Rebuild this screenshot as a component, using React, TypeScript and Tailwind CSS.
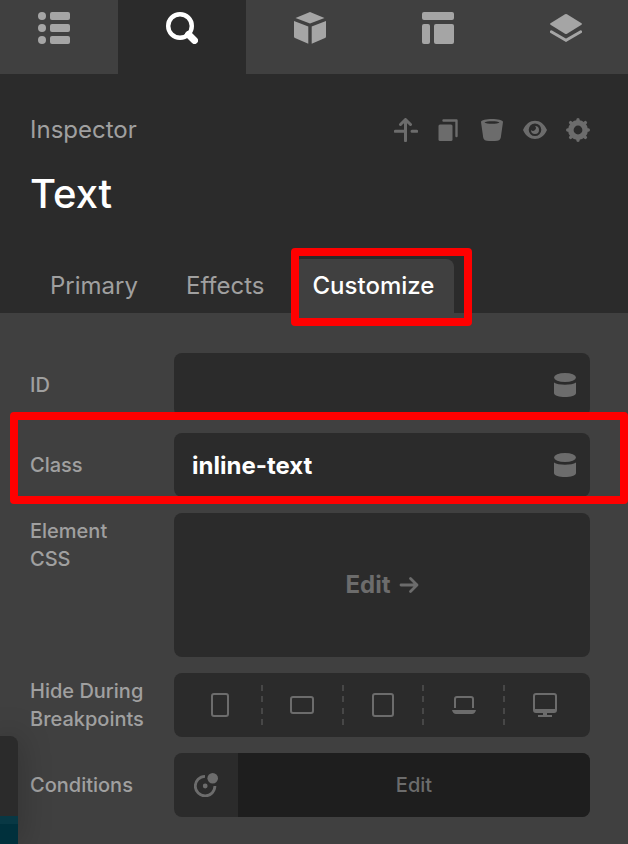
import type { ReactNode } from 'react';

const navItems = [
  {
    label: 'Outline',
    icon: (
      <>
        <circle cx="4" cy="4" r="4" />
        <circle cx="4" cy="16" r="4" />
        <circle cx="4" cy="28" r="4" />
        <rect x="12" width="20" height="8" rx="2" />
        <rect x="12" y="12" width="20" height="8" rx="2" />
        <rect x="12" y="24" width="20" height="8" rx="2" />
      </>
    ),
  },
  {
    label: 'Inspector',
    icon: (
      <>
        <circle cx="14" cy="14" r="11.800" fill="none" stroke="currentColor" strokeWidth="4.400" />
        <path d="M22.500 22.500 28.500 28.500" stroke="currentColor" strokeWidth="7" strokeLinecap="round" />
      </>
    ),
  },
  {
    label: 'Elements',
    icon: (
      <path d="M16 0 30.500 6 16 11.500 1.500 6ZM0 9 14.300 14.500V31.700L1 26Q0 25.500 0 24.500ZM32 9 17.700 14.500V31.700L31 26Q32 25.500 32 24.500Z" />
    ),
  },
  {
    label: 'Layout',
    icon: (
      <>
        <rect width="32" height="8" rx="2" />
        <rect y="12" width="8" height="20" rx="2" />
        <rect x="12" y="12" width="20" height="20" rx="2" />
      </>
    ),
  },
  {
    label: 'Layers',
    icon: (
      <>
        <path d="M15 2.300Q16 1.700 17 2.300L31.500 11.300Q32.300 12 31.500 12.700L17 21.700Q16 22.300 15 21.700L.500 12.700Q-.300 12 .500 11.300Z" />
        <path d="M1.300 19.700 16 28.300 30.700 19.700" fill="none" stroke="currentColor" strokeWidth="2.800" strokeLinecap="round" />
      </>
    ),
  },
];

const actions = [
  {
    label: 'Move',
    icon: (
      <path
        d="M11.500 22.700V2M6.500 6.500 11.500 1.500 16.500 6.500M1.300 13.300H11.500M18 13.300H22.700"
        fill="none"
        stroke="currentColor"
        strokeWidth="3"
        strokeLinecap="round"
        strokeLinejoin="round"
      />
    ),
  },
  {
    label: 'Duplicate',
    icon: (
      <>
        <rect x="1.500" y="6.500" width="14" height="16.500" rx="1.500" />
        <path d="M6.500 2.500H19.500V18" fill="none" stroke="currentColor" strokeWidth="2.400" strokeLinecap="round" strokeLinejoin="round" />
      </>
    ),
  },
  {
    label: 'Delete',
    icon: (
      <path
        fillRule="evenodd"
        d="M1 4C1 0 23 0 23 4L20.800 19.500Q20.300 23 15 23H9Q3.700 23 3.200 19.500ZM4.500 4.300C6 6.300 18 6.300 19.500 4.300C18 2.800 6 2.800 4.500 4.300Z"
      />
    ),
  },
  {
    label: 'Visibility',
    icon: (
      <>
        <path fillRule="evenodd" d="M0 12C5-.500 19-.500 24 12C19 24 5 24 0 12ZM12 5.500A6.300 6.300 0 1 0 12 18.100A6.300 6.300 0 1 0 12 5.500Z" />
        <path d="M12 8A4 4 0 1 1 8 12A2.600 2.600 0 0 0 12 8Z" />
      </>
    ),
  },
  {
    label: 'Settings',
    icon: (
      <>
        <circle cx="12" cy="12" r="7.200" fill="none" stroke="currentColor" strokeWidth="5.600" />
        <path
          d="M12 1.700V4M12 20V22.300M1.700 12H4M20 12H22.300M4.600 4.600 6 6M18 18 19.400 19.400M4.600 19.400 6 18M18 6 19.400 4.600"
          stroke="currentColor"
          strokeWidth="3.400"
          strokeLinecap="round"
        />
      </>
    ),
  },
];

const breakpoints = [
  { label: 'Phone', icon: <rect x="4" y="1" width="16" height="22" rx="2" /> },
  { label: 'Phone landscape', icon: <rect x="1" y="4" width="22" height="16" rx="2" /> },
  { label: 'Tablet', icon: <rect x="2" y="1" width="20" height="22" rx="2" /> },
  {
    label: 'Laptop',
    icon: (
      <>
        <path d="M3 15V6Q3 4 5 4H19Q21 4 21 6V15" />
        <path d="M0 17H24Q23 21 20 21H4Q1 21 0 17Z" fill="currentColor" stroke="none" />
      </>
    ),
  },
  {
    label: 'Desktop',
    icon: (
      <>
        <rect x="1" y="1" width="22" height="18" rx="2" />
        <path d="M1 16H23V19H1ZM10 19H14V22H10ZM5 22H19V24H5Z" fill="currentColor" stroke="none" />
      </>
    ),
  },
];

function Row({ label, id, children }: { label: string; id?: string; children: ReactNode }) {
  return (
    <div className="flex items-center">
      <label htmlFor={id} className="w-36 shrink-0 pr-5 text-xl/7 font-medium">
        {label}
      </label>
      {children}
    </div>
  );
}

function TextField({ id, value }: { id: string; value: string }) {
  return (
    <div className="flex h-16 min-w-0 flex-1 items-center rounded-lg bg-[#2b2b2b] pr-[13px]">
      <input
        id={id}
        defaultValue={value}
        className="h-full min-w-0 flex-1 bg-transparent pl-[18px] text-2xl font-bold text-white outline-none"
      />
      <button type="button" aria-label="Dynamic content" className="text-[#6c6c6c]">
        <svg viewBox="0 0 24 24" className="size-6" fill="currentColor">
          <ellipse cx="12" cy="4.500" rx="11" ry="4.500" />
          <path d="M1 9.500C5 12.500 19 12.500 23 9.500V20C23 25.300 1 25.300 1 20Z" />
        </svg>
      </button>
    </div>
  );
}

export default function App() {
  return (
    <main className="relative min-h-screen overflow-hidden bg-[#404040] font-['Inter',sans-serif] text-[#a0a0a0]">
      <nav className="-mr-0.5 -ml-2.5 grid grid-cols-5">
        {navItems.map(({ label, icon }) => (
          <button
            key={label}
            type="button"
            aria-label={label}
            className={
              label === 'Inspector'
                ? 'flex h-[74px] justify-center bg-[#2b2b2b] pt-3 text-white'
                : 'flex h-[74px] justify-center pt-3 text-[#a5a5a5]'
            }
          >
            <svg viewBox="0 0 32 32" className="size-8" fill="currentColor">
              {icon}
            </svg>
          </button>
        ))}
      </nav>

      <header className="bg-[#2b2b2b] pt-10">
        <div className="flex items-center justify-between pr-[38px] pl-[30px]">
          <p className="text-2xl/8">Inspector</p>
          <div className="flex gap-[19px] text-[#6c6c6c]">
            {actions.map(({ label, icon }) => (
              <button key={label} type="button" aria-label={label}>
                <svg viewBox="0 0 24 24" className="size-6" fill="currentColor">
                  {icon}
                </svg>
              </button>
            ))}
          </div>
        </div>
        <h1 className="mt-5 pl-[30px] text-[40px]/[56px] font-medium text-white">Text</h1>

        <div role="tablist" className="mt-[37px] flex gap-2 pl-[30px] text-2xl">
          <button type="button" role="tab" className="h-[54px] px-5">
            Primary
          </button>
          <button type="button" role="tab" className="h-[54px] px-5">
            Effects
          </button>
          <div className="relative">
            <button type="button" role="tab" aria-selected="true" className="h-[54px] rounded-t-lg bg-[#404040] px-5 font-medium text-white">
              Customize
            </button>
            <div className="pointer-events-none absolute -top-[11px] -right-[18px] -bottom-[13px] -left-0.5 z-10 rounded-sm border-8 border-[#ff0000]" />
          </div>
        </div>
      </header>

      <form className="flex flex-col gap-4 pt-10 pr-[38px] pb-7 pl-[30px]">
        <Row label="ID" id="element-id">
          <TextField id="element-id" value="" />
        </Row>

        <div className="relative">
          <Row label="Class" id="element-class">
            <TextField id="element-class" value="inline-text" />
          </Row>
          <div className="pointer-events-none absolute -top-[21px] -right-[38px] -bottom-[7px] -left-5 z-10 rounded-sm border-8 border-[#ff0000]" />
        </div>

        <div className="flex items-start">
          <label htmlFor="element-css" className="w-36 shrink-0 pt-1 pr-10 text-xl/7 font-medium">
            Element CSS
          </label>
          <button
            id="element-css"
            type="button"
            className="flex h-36 flex-1 items-center justify-center gap-2 rounded-lg bg-[#2b2b2b] text-2xl font-bold text-[#6c6c6c]"
          >
            Edit
            <svg viewBox="0 0 20 20" className="size-5" fill="none" stroke="currentColor" strokeWidth="2.800" strokeLinecap="round" strokeLinejoin="round">
              <path d="M2 10H18M11.500 3.500 18 10 11.500 16.500" />
            </svg>
          </button>
        </div>

        <div className="flex items-center">
          <span id="breakpoints-label" className="w-36 shrink-0 text-xl/7 font-medium">
            Hide During Breakpoints
          </span>
          <div role="group" aria-labelledby="breakpoints-label" className="flex h-16 flex-1 items-center rounded-lg bg-[#2b2b2b] px-1.5 text-[#6c6c6c]">
            {breakpoints.map(({ label, icon }, i) => (
              <div key={label} className="flex h-10 flex-1 items-center">
                {i > 0 && (
                  <div className="flex h-10 w-0.5 flex-col justify-between">
                    {[0, 1, 2, 3].map((dash) => (
                      <span key={dash} className="h-1.5 bg-[#474747]" />
                    ))}
                  </div>
                )}
                <button type="button" aria-label={label} className="flex flex-1 justify-center">
                  <svg viewBox="0 0 24 24" className="size-6" fill="none" stroke="currentColor" strokeWidth="2">
                    {icon}
                  </svg>
                </button>
              </div>
            ))}
          </div>
        </div>

        <Row label="Conditions" id="conditions">
          <div className="flex h-16 flex-1 overflow-hidden rounded-lg bg-[#2b2b2b] text-[#6c6c6c]">
            <button type="button" aria-label="Condition dynamic content" className="flex w-16 items-center justify-center">
              <svg viewBox="0 0 24 24" className="size-6" fill="currentColor">
                <path d="M11 3.300A9.800 9.800 0 1 0 20.900 13" fill="none" stroke="currentColor" strokeWidth="2.800" />
                <circle cx="18.700" cy="5.300" r="5.300" />
                <circle cx="11.200" cy="13" r="2.400" />
              </svg>
            </button>
            <button id="conditions" type="button" className="flex-1 bg-[#1e1e1e] text-xl font-medium">
              Edit
            </button>
          </div>
        </Row>
      </form>

      {/* corner of the floating panel next to the inspector */}
      <div className="absolute bottom-0 left-0 flex h-[109px] w-[18px] flex-col justify-end overflow-hidden rounded-tr-lg bg-[#2b2b2b] shadow-[0_0_32px_rgba(0,0,0,0.3)]">
        <div className="h-2 bg-[#083844]" />
        <div className="h-[21px] bg-[#00303c]" />
      </div>
    </main>
  );
}
